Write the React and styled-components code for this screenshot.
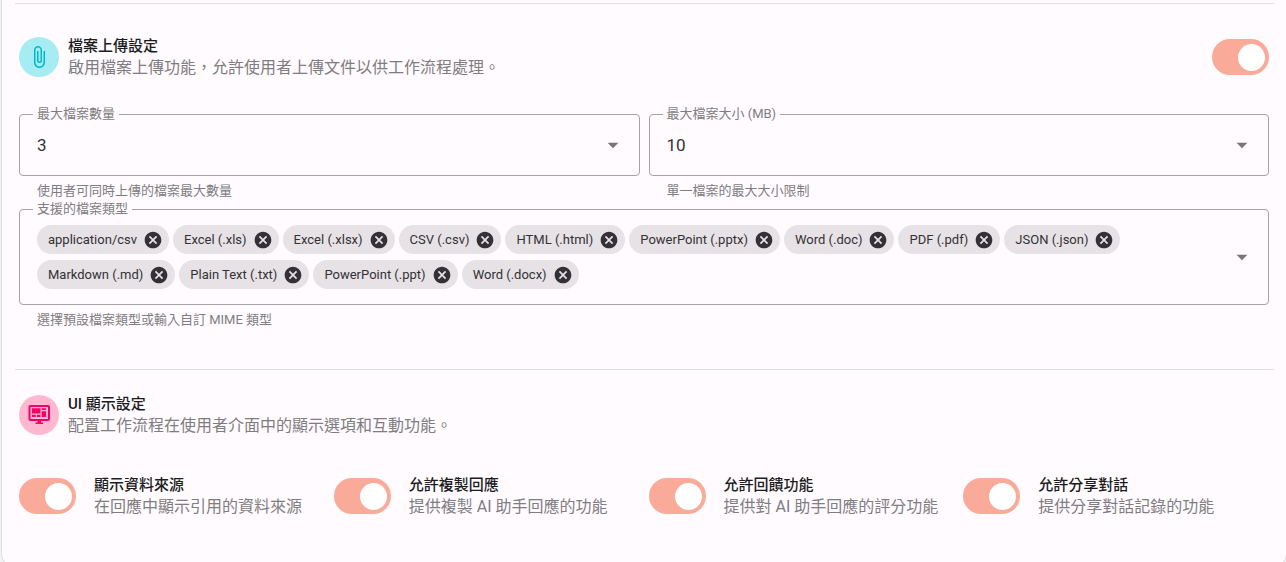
import React, { useState } from "react";
import styled, { createGlobalStyle } from "styled-components";
import { MdArrowDropDown, MdAttachFile, MdCancel } from "react-icons/md";

const FILE_TYPES = [
  "application/csv",
  "Excel (.xls)",
  "Excel (.xlsx)",
  "CSV (.csv)",
  "HTML (.html)",
  "PowerPoint (.pptx)",
  "Word (.doc)",
  "PDF (.pdf)",
  "JSON (.json)",
  "Markdown (.md)",
  "Plain Text (.txt)",
  "PowerPoint (.ppt)",
  "Word (.docx)",
];

const UI_OPTIONS = [
  { id: "sources", title: "顯示資料來源", text: "在回應中顯示引用的資料來源" },
  { id: "copy", title: "允許複製回應", text: "提供複製 AI 助手回應的功能" },
  { id: "feedback", title: "允許回饋功能", text: "提供對 AI 助手回應的評分功能" },
  { id: "share", title: "允許分享對話", text: "提供分享對話記錄的功能" },
];

const DashboardIcon = () => (
  <svg width="24" height="24" viewBox="0 0 24 24" fill="currentColor" aria-hidden="true">
    <path
      fillRule="evenodd"
      d="M3.500 2h17.500a2 2 0 0 1 2 2v12a2 2 0 0 1-2 2H14v1.500h2V21H8.500v-1.500h2V18h-7a2 2 0 0 1-2-2V4a2 2 0 0 1 2-2zM3.500 4v12H21V4z"
    />
    <path d="M5 5.200h8.500v5.300H5zM14.700 5.200H19v1.900h-4.300zM14.700 8.200H19v5.800h-4.300zM5 11.800h3.700V14H5zM9.800 11.800h3.700V14H9.800z" />
  </svg>
);

export default function App() {
  const [types, setTypes] = useState(FILE_TYPES);

  return (
    <>
      <GlobalStyle />
      <Card>
        <Section>
          <Header>
            <Avatar $bg="#a5edf3" $color="#00b8cc">
              <MdAttachFile size={24} />
            </Avatar>
            <Texts as="label" htmlFor="upload">
              <Title>檔案上傳設定</Title>
              <Description>啟用檔案上傳功能，允許使用者上傳文件以供工作流程處理。</Description>
            </Texts>
            <Switch id="upload" type="checkbox" role="switch" defaultChecked />
          </Header>

          <Fields>
            <Field>
              <Outline>
                <Legend>
                  <label htmlFor="max-count">最大檔案數量</label>
                </Legend>
                <Control>
                  <Select id="max-count" defaultValue="3" aria-describedby="max-count-help">
                    <option>1</option>
                    <option>3</option>
                    <option>5</option>
                  </Select>
                  <Arrow size={26} />
                </Control>
              </Outline>
              <Helper id="max-count-help">使用者可同時上傳的檔案最大數量</Helper>
            </Field>
            <Field>
              <Outline>
                <Legend>
                  <label htmlFor="max-size">最大檔案大小 (MB)</label>
                </Legend>
                <Control>
                  <Select id="max-size" defaultValue="10" aria-describedby="max-size-help">
                    <option>5</option>
                    <option>10</option>
                    <option>20</option>
                  </Select>
                  <Arrow size={26} />
                </Control>
              </Outline>
              <Helper id="max-size-help">單一檔案的最大大小限制</Helper>
            </Field>
          </Fields>

          <Field>
            <Outline>
              <Legend>
                <label htmlFor="mime">支援的檔案類型</label>
              </Legend>
              <Control>
                <Chips>
                  {types.map((type) => (
                    <Chip key={type}>
                      {type}
                      <Remove
                        type="button"
                        aria-label={`移除 ${type}`}
                        onClick={() => setTypes(types.filter((t) => t !== type))}
                      >
                        <MdCancel size={20} />
                      </Remove>
                    </Chip>
                  ))}
                  <MimeInput id="mime" type="text" aria-describedby="mime-help" />
                </Chips>
                <Arrow size={26} />
              </Control>
            </Outline>
            <Helper id="mime-help">選擇預設檔案類型或輸入自訂 MIME 類型</Helper>
          </Field>
        </Section>

        <Section>
          <Header>
            <Avatar $bg="#ffb8d0" $color="#f50068">
              <DashboardIcon />
            </Avatar>
            <Texts>
              <Title>UI 顯示設定</Title>
              <Description>配置工作流程在使用者介面中的顯示選項和互動功能。</Description>
            </Texts>
          </Header>
          <Options>
            {UI_OPTIONS.map((option) => (
              <Option key={option.id}>
                <Switch id={option.id} type="checkbox" role="switch" defaultChecked />
                <Texts as="label" htmlFor={option.id}>
                  <Title>{option.title}</Title>
                  <Description>{option.text}</Description>
                </Texts>
              </Option>
            ))}
          </Options>
        </Section>
      </Card>
    </>
  );
}

const GlobalStyle = createGlobalStyle`
  * {
    box-sizing: border-box;
  }

  body {
    margin: 0;
    background: #f3f5f7;
    color: #1c1b1e;
    font-family: Roboto, "Noto Sans CJK TC", sans-serif;
  }
`;

const Card = styled.main`
  margin-left: 2px;
  padding: 3px 12px 48px 13px;
  background: #fffbff;
  border-radius: 0 0 12px 12px;
  box-shadow: 0 0 2px rgba(0, 0, 0, 0.3);
`;

const Section = styled.section`
  padding: 31px 5px 40px 4px;
  border-top: 1px solid #e2dee2;

  &:last-child {
    padding: 23px 5px 0 4px;
  }
`;

const Header = styled.header`
  display: flex;
  align-items: center;
  gap: 9px;
`;

const Avatar = styled.div`
  display: flex;
  align-items: center;
  justify-content: center;
  flex: none;
  width: 40px;
  height: 40px;
  border-radius: 50%;
  background: ${({ $bg }) => $bg};
  color: ${({ $color }) => $color};
`;

const Texts = styled.div`
  display: block;
  flex: 1;
`;

const Title = styled.span`
  display: block;
  font-size: 15px;
  font-weight: 500;
  line-height: 22px;
`;

const Description = styled.span`
  display: block;
  color: #807d81;
  font-size: 16px;
  line-height: 22px;
  white-space: nowrap;
`;

const Switch = styled.input`
  appearance: none;
  display: flex;
  align-items: center;
  justify-content: flex-end;
  flex: none;
  width: 57px;
  height: 36px;
  margin: 0;
  padding: 0 4px;
  border-radius: 18px;
  background: #f9aa98;
  cursor: pointer;

  &::before {
    content: "";
    width: 27px;
    height: 27px;
    border-radius: 50%;
    background: white;
  }

  &:not(:checked) {
    justify-content: flex-start;
    background: #d5d1d6;
  }
`;

const Fields = styled.div`
  display: grid;
  grid-template-columns: 1fr 1fr;
  gap: 9px;
  margin-top: 26px;
`;

const Field = styled.div`
  min-width: 0;
`;

const Outline = styled.fieldset`
  min-width: 0;
  margin: 0;
  padding: 0 13px 8px;
  border: 1px solid #a6a3a7;
  border-radius: 4px;
`;

const Legend = styled.legend`
  padding: 0 4px;
  color: #807d81;
  font-size: 13px;
  line-height: 18px;
`;

const Control = styled.div`
  position: relative;
`;

const Select = styled.select`
  appearance: none;
  display: block;
  width: 100%;
  height: 44px;
  padding: 0 4px;
  border: 0;
  outline: none;
  background: none;
  color: #333135;
  font: inherit;
  font-size: 17px;
`;

const Arrow = styled(MdArrowDropDown)`
  position: absolute;
  top: 50%;
  right: 0;
  transform: translateY(-50%);
  color: #79767a;
  pointer-events: none;
`;

const Helper = styled.p`
  margin: 6px 18px 0;
  color: #807d81;
  font-size: 13px;
  line-height: 18px;
`;

const Chips = styled.div`
  display: flex;
  flex-wrap: wrap;
  gap: 6px 4px;
  padding: 7px 50px 7px 4px;
`;

const Chip = styled.span`
  display: flex;
  align-items: center;
  gap: 6px;
  height: 29px;
  padding: 0 6px 0 11px;
  border-radius: 15px;
  background: #e7e2e6;
  color: #333135;
  font-size: 13px;
`;

const Remove = styled.button`
  display: flex;
  padding: 0;
  border: 0;
  background: none;
  color: #333135;
  cursor: pointer;
`;

const MimeInput = styled.input`
  flex: 1;
  min-width: 30px;
  height: 29px;
  padding: 0;
  border: 0;
  outline: none;
  background: none;
  font: inherit;
`;

const Options = styled.div`
  display: grid;
  grid-template-columns: repeat(4, 1fr);
  column-gap: 9px;
  margin-top: 37px;
`;

const Option = styled.div`
  display: flex;
  align-items: center;
  gap: 18px;
`;
